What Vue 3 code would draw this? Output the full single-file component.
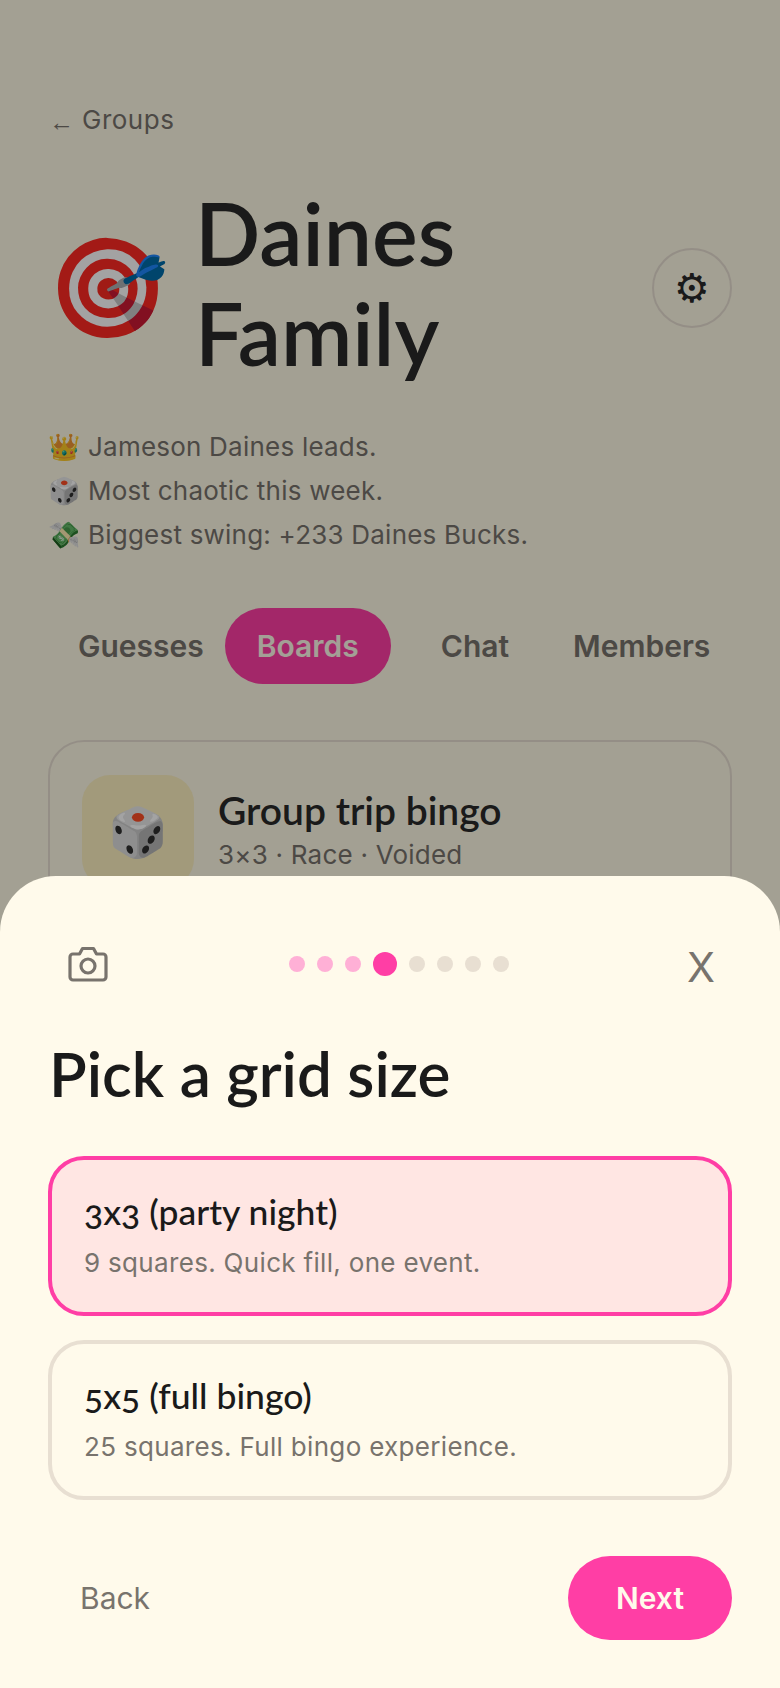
<script setup>
const tabs = [
  { label: 'Guesses', cls: 'guesses' },
  { label: 'Boards', cls: 'active' },
  { label: 'Chat', cls: 'chat' },
  { label: 'Members', cls: 'members' }
]
const stats = [
  { icon: '👑', text: 'Jameson Daines leads.' },
  { icon: '🎲', text: 'Most chaotic this week.' },
  { icon: '💸', text: 'Biggest swing: +233 Daines Bucks.' }
]
const dots = ['done', 'done', 'done', 'current', 'todo', 'todo', 'todo', 'todo']
const options = [
  { title: '3x3 (party night)', sub: '9 squares. Quick fill, one event.', selected: true },
  { title: '5x5 (full bingo)', sub: '25 squares. Full bingo experience.', selected: false }
]
</script>

<template>
  <div class="page">
    <main class="content">
      <a class="back"><span class="arrow">←</span><span>Groups</span></a>
      <header class="head">
        <span class="emoji">🎯</span>
        <h1>Daines<br />Family</h1>
        <button class="gear">⚙</button>
      </header>
      <ul class="stats">
        <li v-for="s in stats" :key="s.text"><span class="stat-icon">{{ s.icon }}</span>{{ s.text }}</li>
      </ul>
      <nav class="tabs">
        <span v-for="t in tabs" :key="t.label" class="tab" :class="t.cls">{{ t.label }}</span>
      </nav>
      <article class="board">
        <div class="board-icon">🎲</div>
        <div class="board-text">
          <h3>Group trip bingo</h3>
          <p>3×3 · Race · Voided</p>
        </div>
      </article>
    </main>

    <div class="scrim"></div>

    <section class="sheet">
      <div class="sheet-top">
        <svg class="camera" viewBox="0 0 40 36" fill="none" stroke="currentColor" stroke-width="3.2" stroke-linejoin="round" stroke-linecap="round">
          <path d="M5 8h6.5l3-5.5h11l3 5.5H35a3 3 0 0 1 3 3v20a3 3 0 0 1-3 3H5a3 3 0 0 1-3-3V11a3 3 0 0 1 3-3z" />
          <circle cx="20" cy="20" r="7" />
        </svg>
        <div class="dots">
          <i v-for="(d, i) in dots" :key="i" class="dot" :class="d"></i>
        </div>
        <span class="close">X</span>
      </div>
      <h2>Pick a grid size</h2>
      <div class="options">
        <div v-for="o in options" :key="o.title" class="option" :class="{ selected: o.selected }">
          <h4>{{ o.title }}</h4>
          <p>{{ o.sub }}</p>
        </div>
      </div>
      <div class="actions">
        <button class="btn-back">Back</button>
        <button class="btn-next">Next</button>
      </div>
    </section>
  </div>
</template>

<style>
html, body { margin: 0; background: #fffaeb; }
</style>

<style scoped>
.page {
  position: relative;
  width: 780px;
  height: 1688px;
  overflow: hidden;
  background: #fffae6;
  font-family: Inter, "Liberation Sans", sans-serif;
  color: #1a1a1a;
}
.content { padding: 101px 48px 0; }
.back {
  display: flex;
  align-items: center;
  height: 36px;
  font-size: 26px;
  letter-spacing: 0.5px;
  color: #78736d;
}
.arrow {
  width: 34px;
  padding: 6px 0 0 1px;
  box-sizing: border-box;
  font-family: "Liberation Sans", sans-serif;
  font-size: 25px;
  letter-spacing: 0;
}
.head {
  display: flex;
  align-items: center;
  margin-top: 50px;
  height: 200px;
}
.emoji {
  width: 148px;
  flex: none;
  margin: 4px 0 0 -1px;
  font-size: 98px;
  line-height: 1;
  font-family: "Noto Color Emoji", sans-serif;
}
h1 {
  flex: 1;
  margin: 0 0 8px;
  font-family: Lato, sans-serif;
  font-weight: 600;
  font-size: 86px;
  line-height: 100px;
  color: #2a2a2a;
}
.gear {
  flex: none;
  width: 80px;
  height: 80px;
  margin-top: 2px;
  border-radius: 50%;
  border: 2px solid #e8dfd2;
  background: transparent;
  color: #2a2a2a;
  font-size: 40px;
  line-height: 1;
  padding: 0;
  font-family: "DejaVu Sans", sans-serif;
}
.stats {
  list-style: none;
  margin: 38px 0 0;
  padding: 0;
  font-size: 26px;
  line-height: 44px;
  letter-spacing: 0.22px;
  color: #78736d;
}
.stat-icon { display: inline-block; width: 40px; }
.tabs {
  display: flex;
  align-items: center;
  margin: 51px 0 0 30px;
  height: 76px;
  gap: 21px;
  font-size: 30px;
  font-weight: 600;
  color: #78736d;
}
.tab { height: 76px; display: flex; align-items: center; white-space: nowrap; }
.tab.active { background: #ff3ea5; color: #fffaeb; border-radius: 38px; padding: 0 32px; }
.tab.chat { margin-left: 29px; }
.tab.members { margin-left: 43px; }
.board {
  display: flex;
  gap: 24px;
  margin-top: 56px;
  height: 300px;
  padding: 33px 32px;
  border: 2px solid #e8dfd2;
  border-radius: 36px;
  box-sizing: border-box;
}
.board-icon {
  width: 112px;
  height: 112px;
  flex: none;
  display: flex;
  align-items: center;
  justify-content: center;
  border-radius: 28px;
  background: #fdf1c0;
  font-size: 48px;
}
.board-text h3 {
  margin: 9px 0 0;
  font-family: Lato, sans-serif;
  font-weight: 600;
  font-size: 39px;
  line-height: 53px;
  color: #2a2a2a;
}
.board-text p {
  margin: 0;
  font-size: 26px;
  line-height: 36px;
  letter-spacing: 0.22px;
  color: #78736d;
}
.scrim { position: absolute; inset: 0; background: rgba(0, 0, 0, 0.36); }
.sheet {
  position: absolute;
  left: 0;
  right: 0;
  bottom: 0;
  height: 812px;
  box-sizing: border-box;
  padding: 68px 48px 0;
  background: #fffaeb;
  border-radius: 56px 56px 0 0;
}
.sheet-top {
  position: relative;
  display: flex;
  align-items: center;
  height: 40px;
}
.camera { width: 42px; height: 36px; margin-left: 19px; color: #78736d; flex: none; }
.dots {
  position: absolute;
  left: 241px;
  top: 8px;
  display: flex;
  align-items: center;
  gap: 12px;
  height: 24px;
}
.dot { width: 16px; height: 16px; border-radius: 50%; }
.dot.done { background: #ffb0d6; }
.dot.current { width: 24px; height: 24px; background: #ff3ea5; }
.dot.todo { background: #e8dfd2; }
.close {
  position: absolute;
  right: 17px;
  top: -2px;
  font-size: 41px;
  line-height: 50px;
  color: #78736d;
}
h2 {
  margin: 47px 0 0;
  padding-left: 1px;
  font-family: Lato, sans-serif;
  font-weight: 600;
  font-size: 62px;
  line-height: 84px;
}
.options { display: flex; flex-direction: column; gap: 24px; margin-top: 41px; }
.option {
  height: 160px;
  box-sizing: border-box;
  padding: 30px 32px;
  border: 4px solid #e8dfd2;
  border-radius: 36px;
}
.option.selected { border-color: #ff3ea5; background: #ffe6e3; }
.option h4 {
  margin: 0;
  font-family: Lato, sans-serif;
  font-weight: 500;
  font-size: 35.5px;
  line-height: 44px;
  font-feature-settings: "onum";
}
.option p {
  margin: 11px 0 0;
  font-size: 26px;
  line-height: 36px;
  letter-spacing: 0.32px;
  color: #78736d;
}
.actions {
  display: flex;
  justify-content: space-between;
  align-items: center;
  margin-top: 56px;
}
button { font-family: Inter, sans-serif; border: 0; }
.btn-back {
  background: none;
  padding: 0 0 0 32px;
  font-size: 30px;
  color: #78736d;
}
.btn-next {
  width: 164px;
  height: 84px;
  border-radius: 42px;
  background: #ff3ea5;
  color: #fffaeb;
  font-size: 30px;
  font-weight: 600;
}
</style>
